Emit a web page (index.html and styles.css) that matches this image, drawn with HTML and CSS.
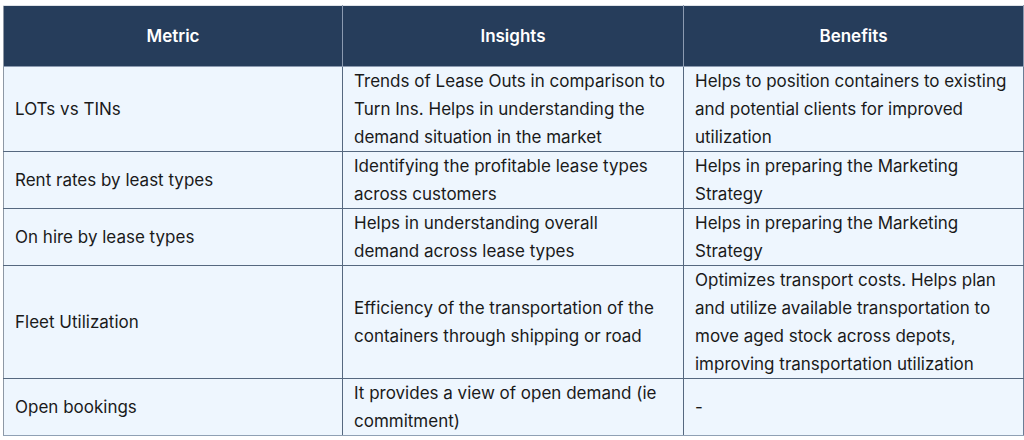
FILE: index.html
```html
<!DOCTYPE html>
<html lang="en">
<head>
<meta charset="utf-8">
<title>Metrics</title>
<link rel="stylesheet" href="styles.css">
</head>
<body>
<div class="wrap">
<table class="metrics">
  <colgroup>
    <col class="c1"><col class="c2"><col class="c3">
  </colgroup>
  <thead>
    <tr><th>Metric</th><th>Insights</th><th>Benefits</th></tr>
  </thead>
  <tbody>
    <tr class="r1">
      <td>LOTs vs TINs</td>
      <td>Trends of Lease Outs in comparison to Turn Ins. Helps in understanding the demand situation in the market</td>
      <td>Helps to position containers to existing and potential clients for improved utilization</td>
    </tr>
    <tr>
      <td>Rent rates by least types</td>
      <td>Identifying the profitable lease types across customers</td>
      <td>Helps in preparing the Marketing Strategy</td>
    </tr>
    <tr>
      <td>On hire by lease types</td>
      <td>Helps in understanding overall demand across lease types</td>
      <td>Helps in preparing the Marketing Strategy</td>
    </tr>
    <tr class="r4">
      <td>Fleet Utilization</td>
      <td>Efficiency of the transportation of the containers through shipping or road</td>
      <td>Optimizes transport costs. Helps plan and utilize available transportation to move aged stock across depots, improving transportation utilization</td>
    </tr>
    <tr>
      <td>Open bookings</td>
      <td>It provides a view of open demand (ie commitment)</td>
      <td>-</td>
    </tr>
  </tbody>
</table>
</div>
</body>
</html>
```
FILE: styles.css
```css
html, body {
  margin: 0;
  padding: 0;
  background: #ffffff;
}
.wrap {
  padding: 5px 0 0 3px;
}
.metrics {
  width: 1020px;
  border-collapse: collapse;
  table-layout: fixed;
  font-family: Inter, "Noto Sans", sans-serif;
  font-size: 17px;
  color: #1a1a1a;
}
.c1 { width: 339px; }
.c2 { width: 341px; }
.c3 { width: 340px; }
.metrics th {
  background: #263d5b;
  color: #ffffff;
  font-weight: 600;
  height: 60px;
  padding: 0 12px;
  text-align: center;
  vertical-align: middle;
  border: 1px solid #8b9ab0;
  border-top-color: #dfe3e8;
}
.metrics td {
  background: #eef6fe;
  line-height: 28px;
  padding: 0 11px;
  vertical-align: middle;
  border: 1px solid #55687f;
}
.metrics td:nth-child(2) {
  padding-right: 18px;
}
.metrics tr > td:first-child,
.metrics tr > th:first-child {
  border-left-color: #8e98a5;
}
.metrics tr > td:last-child {
  border-right-color: #6b7d95;
}
.metrics tbody tr:last-child td {
  border-bottom-color: #8fa0b4;
}
.metrics .r1 td { height: 84px; }
.metrics .r4 td { height: 112px; }
```
